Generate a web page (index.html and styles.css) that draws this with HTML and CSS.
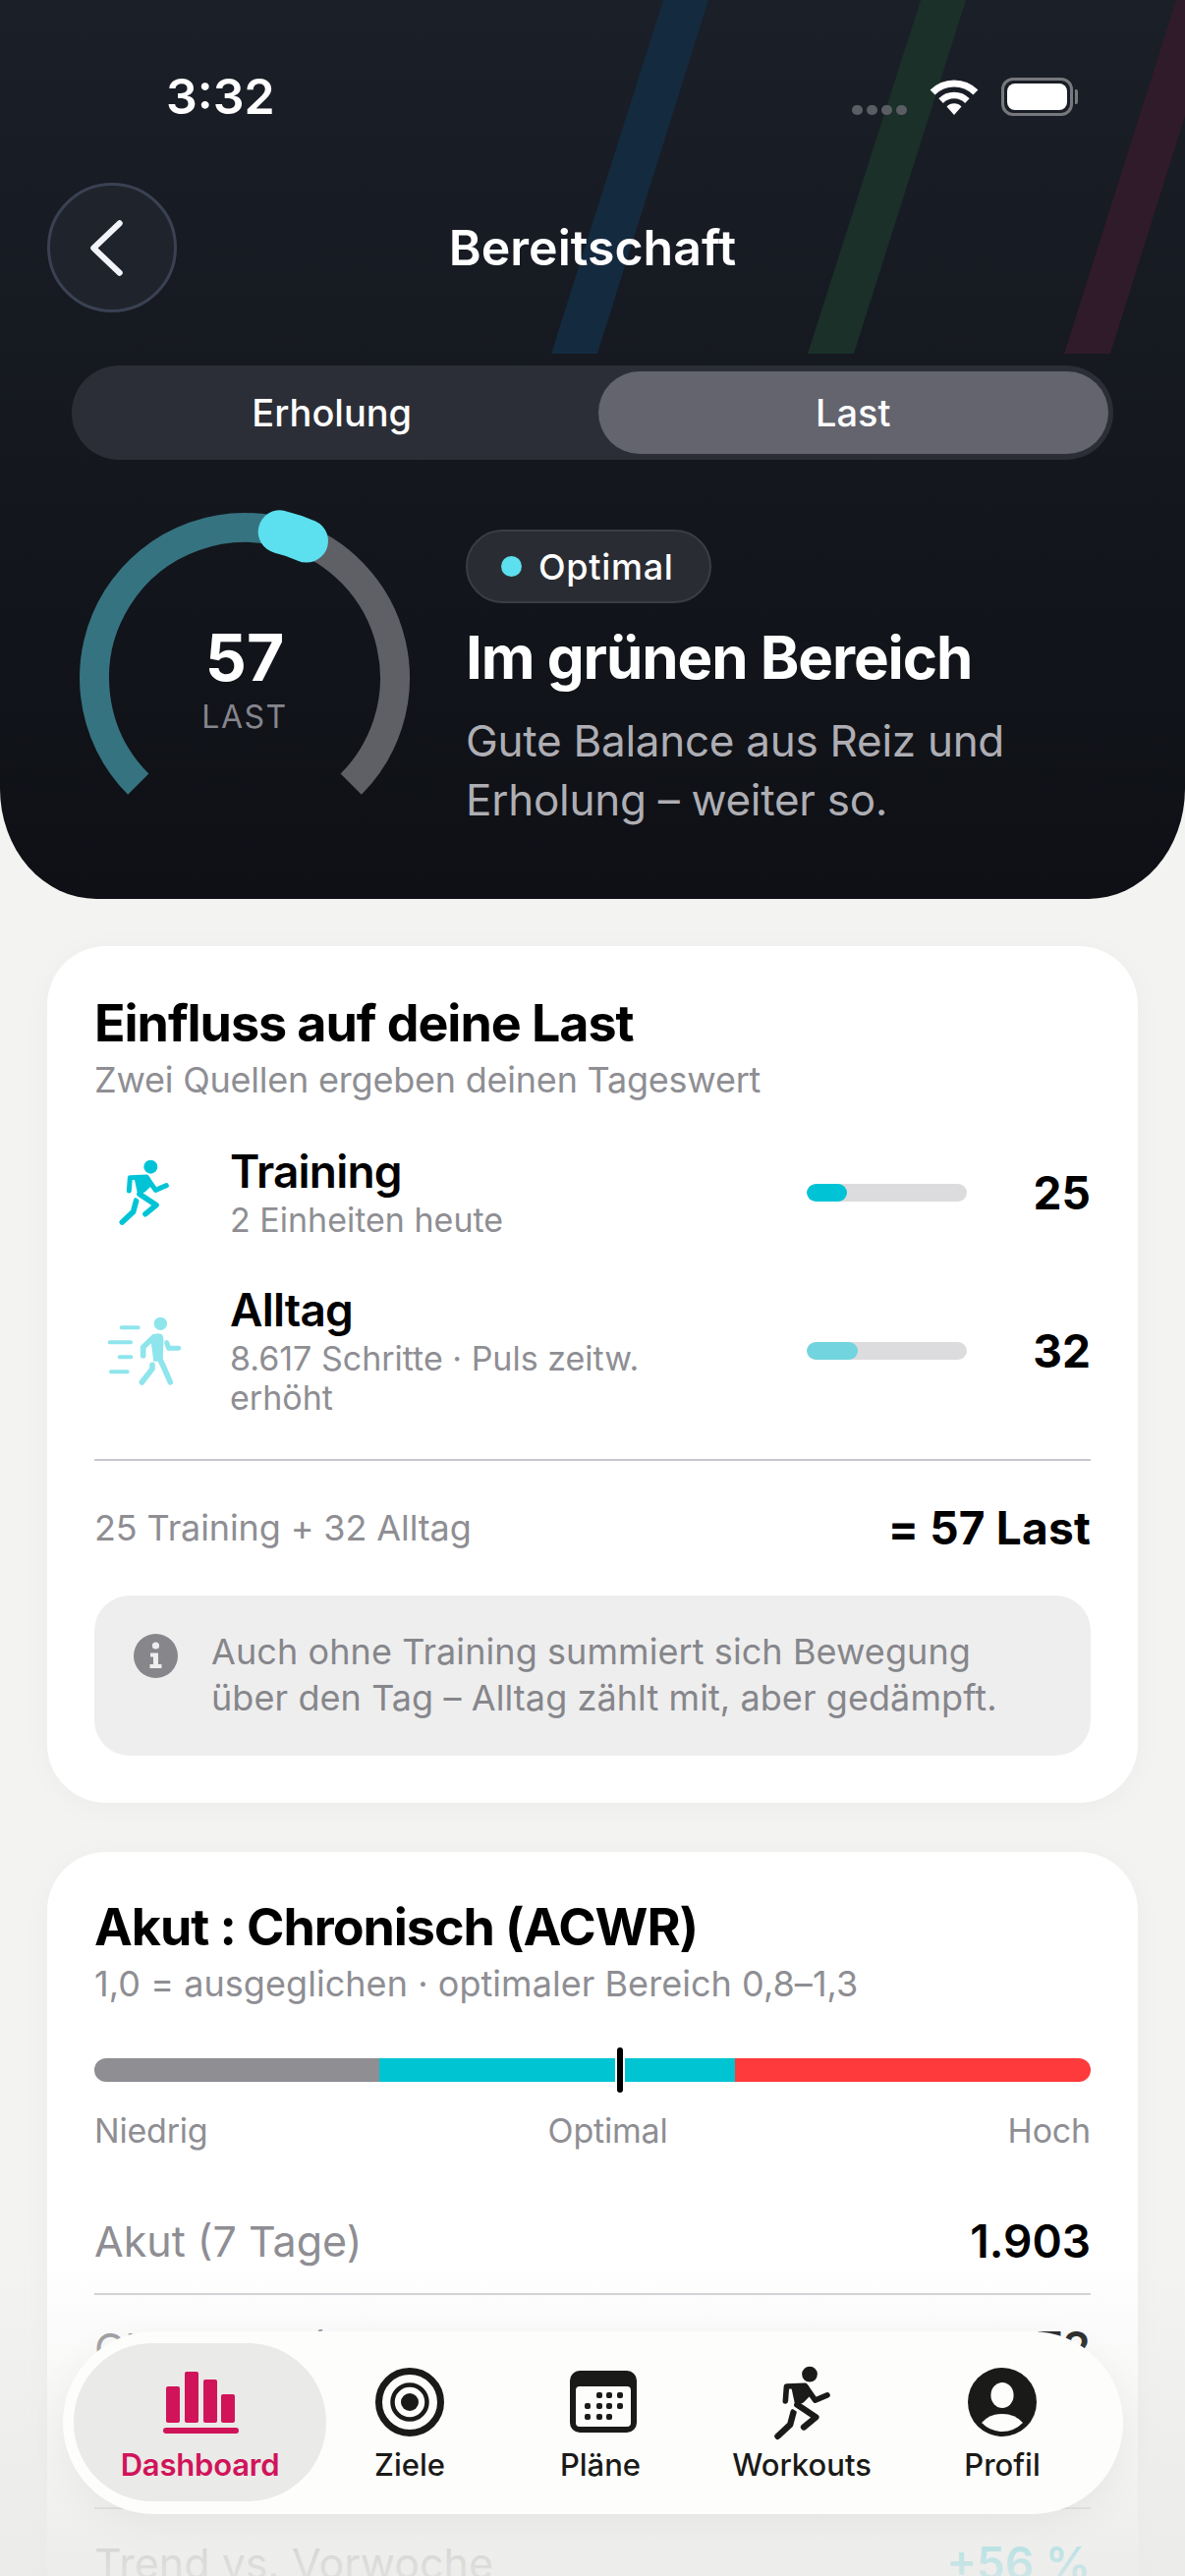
FILE: index.html
```html
<!DOCTYPE html>
<html lang="de">
<head>
    <meta charset="UTF-8">
    <meta name="viewport" content="width=device-width, initial-scale=1.0">
    <title>Bereitschaft</title>
    <link rel="stylesheet" href="styles.css">
</head>
<body>
<div class="page">
    <header class="hero">
        <svg class="stripes" width="1206" height="360" viewBox="0 0 1206 360">
            <polygon points="675,0 721,0 608,360 561,360" fill="#142a3f"/>
            <polygon points="937,0 983,0 869,360 822,360" fill="#1a3029"/>
            <polygon points="1197,0 1243,0 1130,360 1083,360" fill="#301b2b"/>
        </svg>

        <div class="status-bar">
            <span class="time">3:32</span>
            <div class="status-icons">
                <div class="signal"><i></i><i></i><i></i><i></i></div>
                <svg width="52" height="38" viewBox="0 0 52 38">
                    <path d="M4.1 15.1A31 31 0 0 1 47.9 15.1" fill="none" stroke="#fff" stroke-width="7"/>
                    <path d="M12.6 23.6A19 19 0 0 1 39.4 23.6" fill="none" stroke="#fff" stroke-width="6.5"/>
                    <path d="M26 38L18.5 29.5A10.5 10.5 0 0 1 33.5 29.5Z" fill="#fff"/>
                </svg>
                <div class="battery"><div class="battery-level"></div></div>
            </div>
        </div>

        <div class="top-bar">
            <button class="back-button">
                <svg width="44" height="66" viewBox="0 0 44 66">
                    <path d="M29.75 8.25L3.25 33.5L29.75 58.75" fill="none" stroke="#f2f4fa" stroke-width="6" stroke-linecap="round" stroke-linejoin="round"/>
                </svg>
            </button>
            <h1 class="page-title">Bereitschaft</h1>
        </div>

        <div class="segments">
            <div class="segment">Erholung</div>
            <div class="segment segment-active">Last</div>
        </div>

        <div class="hero-body">
            <div class="gauge">
                <svg class="gauge-arc" width="336" height="300" viewBox="0 0 336 300">
                    <path d="M59.8 276.2A153 153 0 0 1 217.6 23.3" fill="none" stroke="#367380" stroke-width="30"/>
                    <path d="M217.6 23.3A153 153 0 0 1 276.2 276.2" fill="none" stroke="#5f6066" stroke-width="30"/>
                    <path d="M203.7 19.3A153 153 0 0 1 231 28.6" fill="none" stroke="#5cdfee" stroke-width="44" stroke-linecap="round"/>
                </svg>
                <div class="gauge-label">
                    <div class="gauge-value">57</div>
                    <div class="gauge-unit">LAST</div>
                </div>
            </div>
            <div class="hero-text">
                <div class="badge"><span class="badge-dot"></span>Optimal</div>
                <h2 class="hero-heading">Im grünen Bereich</h2>
                <p class="hero-desc">Gute Balance aus Reiz und Erholung – weiter so.</p>
            </div>
        </div>
    </header>

    <section class="card card-load">
        <h3 class="card-title">Einfluss auf deine Last</h3>
        <p class="card-sub card-sub-tight">Zwei Quellen ergeben deinen Tageswert</p>

        <div class="source source-first">
            <div class="source-icon">
                <svg width="54" height="68" viewBox="180 152 160 204">
                    <circle cx="279" cy="175" r="21" fill="#00c4d6"/>
                    <path d="M235 278L226 312L192 344" fill="none" stroke="#00c4d6" stroke-width="17" stroke-linecap="round" stroke-linejoin="round"/>
                    <path d="M226 262L258 283" fill="none" stroke="#fff" stroke-width="4"/>
                    <path d="M213 248L216 208L266 206L294 246L327 232" fill="none" stroke="#00c4d6" stroke-width="15" stroke-linecap="round" stroke-linejoin="round"/>
                    <path d="M228 206H276L282 232L262 252L240 262Z" fill="#00c4d6"/>
                    <path d="M245 258L296 292L263 319" fill="none" stroke="#00c4d6" stroke-width="17" stroke-linecap="round" stroke-linejoin="round"/>
                </svg>
            </div>
            <div class="source-text">
                <div class="source-name">Training</div>
                <div class="source-sub">2 Einheiten heute</div>
            </div>
            <div class="meter"><div class="meter-fill meter-training"></div></div>
            <div class="source-value">25</div>
        </div>

        <div class="source">
            <div class="source-icon">
                <svg width="76" height="70" viewBox="148 628 228 210">
                    <g fill="none" stroke="#8fe5ec" stroke-linecap="round" stroke-linejoin="round">
                        <path d="M192 662H243M156 707H220M186 752H221M160 797H210" stroke-width="12"/>
                        <path d="M291 690L258 722V747" stroke-width="17"/>
                        <path d="M330 708L336 725H366" stroke-width="15"/>
                        <path d="M303 745L322 785L341 829" stroke-width="17"/>
                        <path d="M286 776V788L254 829" stroke-width="17"/>
                    </g>
                    <circle cx="311" cy="650" r="20" fill="#8fe5ec"/>
                    <path d="M280 692Q296 674 314 682Q322 688 320 706L318 765H290Z" fill="#8fe5ec"/>
                </svg>
            </div>
            <div class="source-text">
                <div class="source-name">Alltag</div>
                <div class="source-sub">8.617 Schritte · Puls zeitw. erhöht</div>
            </div>
            <div class="meter"><div class="meter-fill meter-daily"></div></div>
            <div class="source-value">32</div>
        </div>

        <div class="sum-row">
            <span class="sum-parts">25 Training + 32 Alltag</span>
            <span class="sum-total">= 57 Last</span>
        </div>

        <div class="info-box">
            <svg class="info-icon" width="45" height="45" viewBox="0 0 45 45">
                <circle cx="22.5" cy="22.5" r="22.5" fill="#86868b"/>
                <circle cx="22.5" cy="12" r="3.6" fill="#eee"/>
                <path d="M17 19.5H25V31H28.5V35H16.5V31H20V23.5H17Z" fill="#eee"/>
            </svg>
            <p class="info-text">Auch ohne Training summiert sich Bewegung über den Tag – Alltag zählt mit, aber gedämpft.</p>
        </div>
    </section>

    <section class="card card-ratio">
        <h3 class="card-title">Akut : Chronisch (ACWR)</h3>
        <p class="card-sub">1,0 = ausgeglichen · optimaler Bereich 0,8–1,3</p>

        <div class="zone-bar">
            <div class="zone zone-low"></div>
            <div class="zone zone-ok"></div>
            <div class="zone zone-high"></div>
            <div class="zone-marker"></div>
        </div>
        <div class="zone-labels">
            <span>Niedrig</span>
            <span>Optimal</span>
            <span>Hoch</span>
        </div>

        <div class="stat stat-first"><span class="stat-label">Akut (7 Tage)</span><span class="stat-value">1.903</span></div>
        <div class="stat"><span class="stat-label">Chronisch (28 Tage)</span><span class="stat-value">1.672</span></div>
        <div class="stat"><span class="stat-label">Ratio (7 Tage)</span><span class="stat-value">1,14</span></div>
        <div class="stat stat-last"><span class="stat-label">Trend vs. Vorwoche</span><span class="stat-value stat-up">+56 %</span></div>
    </section>

    <div class="bottom-fade"></div>

    <nav class="tab-bar">
        <div class="tab tab-active">
            <svg width="80" height="80" viewBox="0 0 80 80">
                <g fill="#d1145a" transform="translate(2 0)">
                    <rect x="3" y="24" width="14" height="37" rx="2"/>
                    <rect x="22" y="9" width="14" height="52" rx="2"/>
                    <rect x="41" y="17" width="14" height="44" rx="2"/>
                    <rect x="59" y="32" width="14" height="29" rx="2"/>
                    <rect x="0" y="66" width="77" height="6" rx="3"/>
                </g>
            </svg>
            <span>Dashboard</span>
        </div>
        <div class="tab">
            <svg width="80" height="80" viewBox="0 0 80 80">
                <g fill="none" stroke="#1a1a18">
                    <circle cx="40" cy="40" r="31.5" stroke-width="7"/>
                    <circle cx="40" cy="40" r="17.5" stroke-width="4.5"/>
                </g>
                <circle cx="40" cy="40" r="9" fill="#1a1a18"/>
            </svg>
            <span>Ziele</span>
        </div>
        <div class="tab">
            <svg width="80" height="80" viewBox="0 0 80 80">
                <g transform="translate(3 0)">
                    <rect x="6" y="8" width="68" height="63" rx="10" fill="#1a1a18"/>
                    <rect x="12" y="24" width="56" height="41" rx="4" fill="#fdfdfb"/>
                    <g fill="#1a1a18">
                        <rect x="33" y="30" width="6" height="6" rx="2"/><rect x="43" y="30" width="6" height="6" rx="2"/><rect x="54" y="30" width="6" height="6" rx="2"/>
                        <rect x="21" y="41" width="6" height="6" rx="2"/><rect x="33" y="41" width="6" height="6" rx="2"/><rect x="43" y="41" width="6" height="6" rx="2"/><rect x="54" y="41" width="6" height="6" rx="2"/>
                        <rect x="21" y="52" width="6" height="6" rx="2"/><rect x="33" y="52" width="6" height="6" rx="2"/><rect x="43" y="52" width="6" height="6" rx="2"/>
                    </g>
                </g>
            </svg>
            <span>Pläne</span>
        </div>
        <div class="tab">
            <svg width="80" height="80" viewBox="0 0 80 80">
                <g transform="translate(11 3) scale(.374)">
                    <g transform="translate(-180 -152)">
                        <circle cx="279" cy="175" r="21" fill="#1a1a18"/>
                        <path d="M235 278L226 312L192 344" fill="none" stroke="#1a1a18" stroke-width="17" stroke-linecap="round" stroke-linejoin="round"/>
                        <path d="M226 262L258 283" fill="none" stroke="#fdfdfb" stroke-width="5"/>
                        <path d="M213 248L216 208L266 206L294 246L327 232" fill="none" stroke="#1a1a18" stroke-width="15" stroke-linecap="round" stroke-linejoin="round"/>
                        <path d="M228 206H276L282 232L262 252L240 262Z" fill="#1a1a18"/>
                        <path d="M245 258L296 292L263 319" fill="none" stroke="#1a1a18" stroke-width="17" stroke-linecap="round" stroke-linejoin="round"/>
                    </g>
                </g>
            </svg>
            <span>Workouts</span>
        </div>
        <div class="tab">
            <svg width="80" height="80" viewBox="0 0 80 80">
                <circle cx="40" cy="40" r="35" fill="#1a1a18"/>
                <ellipse cx="40" cy="33" rx="11.6" ry="13" fill="#fdfdfb"/>
                <path d="M19 61Q27 52 40 52Q53 52 61 61Q52 70 40 70Q28 70 19 61Z" fill="#fdfdfb"/>
            </svg>
            <span>Profil</span>
        </div>
    </nav>
</div>
</body>
</html>
```
FILE: styles.css
```css
* {
    box-sizing: border-box;
}
body {
    margin: 0;
    font-family: Inter, "Noto Sans", sans-serif;
    background-color: #f3f3f1;
}
h1, h2, h3, p {
    margin: 0;
}
.page {
    position: relative;
    width: 1206px;
    height: 2622px;
    overflow: hidden;
}

/* dark header */
.hero {
    position: relative;
    height: 915px;
    background: linear-gradient(180deg, #1b1f28 0%, #0e1015 100%);
    border-radius: 0 0 98px 98px / 0 0 112px 112px;
    color: #fff;
}
.stripes {
    position: absolute;
    top: 0;
    left: 0;
}
.status-bar {
    position: relative;
    display: flex;
    justify-content: space-between;
    align-items: center;
    height: 186px;
    padding: 10px 114px 0 169px;
}
.time {
    font-size: 50px;
    font-weight: 600;
}
.status-icons {
    display: flex;
    align-items: center;
    gap: 22px;
}
.signal {
    display: flex;
    gap: 4px;
    margin-top: 28px;
}
.signal i {
    width: 11px;
    height: 10px;
    border-radius: 5px;
    background-color: #5a5d63;
}
.battery {
    position: relative;
    width: 73px;
    height: 39px;
    padding: 3px;
    border: 3px solid #77787d;
    border-radius: 12px;
}
.battery::after {
    content: "";
    position: absolute;
    top: 9px;
    right: -8px;
    width: 3px;
    height: 15px;
    background-color: #77787d;
    border-radius: 0 2px 2px 0;
}
.battery-level {
    height: 100%;
    background-color: #fff;
    border-radius: 8px;
}
.top-bar {
    position: relative;
    display: grid;
    grid-template-columns: 132px 1fr 132px;
    align-items: center;
    height: 132px;
    padding: 0 48px;
}
.back-button {
    display: flex;
    align-items: center;
    justify-content: center;
    width: 132px;
    height: 132px;
    padding: 0;
    background-color: #1f232c;
    border: 3px solid #3a4152;
    border-radius: 50%;
}
.page-title {
    font-size: 50px;
    font-weight: 600;
    text-align: center;
}
.segments {
    position: relative;
    display: grid;
    grid-template-columns: 1fr 1fr;
    gap: 11px;
    height: 96px;
    margin: 54px 73px 0;
    padding: 6px 5px;
    background-color: #2c2e37;
    border-radius: 48px;
}
.segment {
    display: flex;
    align-items: center;
    justify-content: center;
    font-size: 38px;
    font-weight: 500;
    border-radius: 42px;
}
.segment-active {
    background-color: #63646d;
}
.hero-body {
    display: flex;
    gap: 57px;
    margin-top: 54px;
    padding-left: 81px;
}
.gauge {
    position: relative;
    width: 336px;
    height: 300px;
    flex-shrink: 0;
}
.gauge-arc {
    overflow: visible;
}
.gauge-label {
    position: absolute;
    top: 115px;
    left: 0;
    right: 0;
    text-align: center;
}
.gauge-value {
    font-size: 66px;
    font-weight: 700;
    line-height: 64px;
}
.gauge-unit {
    margin-top: 9px;
    font-size: 32px;
    line-height: 40px;
    letter-spacing: 1.5px;
    color: #85858d;
}
.hero-text {
    margin-top: 17px;
}
.badge {
    display: inline-flex;
    align-items: center;
    gap: 17px;
    height: 75px;
    padding: 0 36px 0 34px;
    font-size: 36px;
    font-weight: 500;
    letter-spacing: 0.7px;
    background-color: #2a2c33;
    border: 2px solid #3b3d44;
    border-radius: 38px;
}
.badge-dot {
    width: 21px;
    height: 21px;
    background-color: #5cdfee;
    border-radius: 50%;
}
.hero-heading {
    margin-top: 19px;
    font-size: 60px;
    font-weight: 700;
    line-height: 72px;
    letter-spacing: -1.05px;
}
.hero-desc {
    margin-top: 19px;
    width: 600px;
    font-size: 44px;
    line-height: 60px;
    letter-spacing: -0.27px;
    color: #aeaeb4;
}

/* cards */
.card {
    margin: 48px 48px 0;
    padding: 48px 48px 0;
    background-color: #fff;
    border-radius: 60px;
    box-shadow: 0 4px 30px rgba(0, 0, 0, 0.03);
}
.card-load {
    height: 872px;
}
.card-ratio {
    margin-top: 50px;
    height: 900px;
}
.card-title {
    font-size: 52px;
    font-weight: 700;
    line-height: 62px;
    letter-spacing: -1.05px;
    color: #000;
}
.card-ratio .card-title {
    margin-top: -2px;
}
.card-sub {
    margin-top: 3px;
    font-size: 36px;
    line-height: 46px;
    letter-spacing: 0.05px;
    color: #8e8e93;
}
.card-sub-tight {
    letter-spacing: -0.22px;
}
.source {
    display: grid;
    grid-template-columns: 138px 587px 163px 1fr;
    align-items: center;
    margin-top: 44px;
}
.source-first {
    margin-top: 43px;
}
.source-icon {
    display: flex;
    justify-content: center;
    padding-right: 36px;
}
.source-name {
    font-size: 46px;
    font-weight: 600;
    line-height: 54px;
    letter-spacing: -0.8px;
    color: #000;
}
.source-sub {
    margin-top: 3px;
    width: 480px;
    font-size: 34px;
    line-height: 40px;
    color: #8e8e93;
}
.meter {
    height: 18px;
    background-color: #dcdcde;
    border-radius: 9px;
    overflow: hidden;
}
.meter-fill {
    height: 100%;
    border-radius: 9px;
}
.meter-training {
    width: 25%;
    background-color: #00c4d6;
}
.meter-daily {
    width: 32%;
    background-color: #72d4de;
}
.source-value {
    font-size: 46px;
    font-weight: 700;
    text-align: right;
    color: #000;
}
.sum-row {
    display: flex;
    justify-content: space-between;
    align-items: center;
    height: 139px;
    margin-top: 42px;
    padding-bottom: 2px;
    border-top: 2px solid #c8c8cc;
}
.sum-parts {
    font-size: 36px;
    letter-spacing: -0.12px;
    color: #8e8e93;
}
.sum-total {
    font-size: 46px;
    font-weight: 700;
    letter-spacing: 0.2px;
    color: #000;
}
.info-box {
    display: flex;
    align-items: flex-start;
    gap: 34px;
    height: 163px;
    padding: 34px 40px 0;
    background-color: #eee;
    border-radius: 36px;
}
.info-icon {
    flex-shrink: 0;
    margin-top: 5px;
}
.info-text {
    font-size: 36px;
    line-height: 47px;
    letter-spacing: 0.08px;
    color: #86868b;
}

/* acwr bar */
.zone-bar {
    position: relative;
    display: flex;
    height: 24px;
    margin-top: 53px;
}
.zone-low {
    width: 290px;
    background-color: #8e8e93;
    border-radius: 12px 0 0 12px;
}
.zone-ok {
    width: 362px;
    background-color: #00c4d2;
}
.zone-high {
    flex: 1;
    background-color: #ff3a3c;
    border-radius: 0 12px 12px 0;
}
.zone-marker {
    position: absolute;
    top: -11px;
    left: 532px;
    width: 6px;
    height: 46px;
    background-color: #000;
    border-radius: 3px;
    box-shadow: 0 0 0 2px #fff;
}
.zone-labels {
    display: flex;
    justify-content: space-between;
    margin-top: 29px;
    font-size: 34px;
    line-height: 42px;
    letter-spacing: -0.2px;
    color: #8e8e93;
}
.stat {
    display: flex;
    justify-content: space-between;
    align-items: center;
    height: 109px;
    border-bottom: 2px solid #d1d1d5;
}
.stat-first {
    margin-top: 37px;
}
.stat-last {
    border-bottom: 0;
}
.stat-label {
    font-size: 43px;
    color: #8e8e93;
}
.stat-value {
    font-size: 46px;
    font-weight: 600;
    color: #000;
}
.stat-up {
    color: #00c4d6;
}

/* sits over the end of the scrolled content */
.bottom-fade {
    position: absolute;
    left: 0;
    right: 0;
    bottom: 0;
    height: 322px;
    background: linear-gradient(180deg, rgba(234, 234, 232, 0) 0%, rgba(234, 234, 232, 0.88) 100%);
}
.tab-bar {
    position: absolute;
    top: 2373px;
    left: 64px;
    display: grid;
    grid-template-columns: 257px 170px 218px 192px 216px;
    width: 1079px;
    height: 186px;
    padding: 12px 0 0 11px;
    background-color: #fdfdfb;
    border-radius: 93px;
    box-shadow: 0 10px 40px rgba(0, 0, 0, 0.05);
}
.tab {
    display: flex;
    flex-direction: column;
    align-items: center;
    gap: 4px;
    height: 161px;
    padding-top: 20px;
    font-size: 31px;
    font-weight: 500;
    line-height: 40px;
    color: #1a1a18;
}
.tab-active {
    font-weight: 600;
    letter-spacing: -0.2px;
    color: #d1145a;
    background-color: #eaeae8;
    border-radius: 80px;
}
```
